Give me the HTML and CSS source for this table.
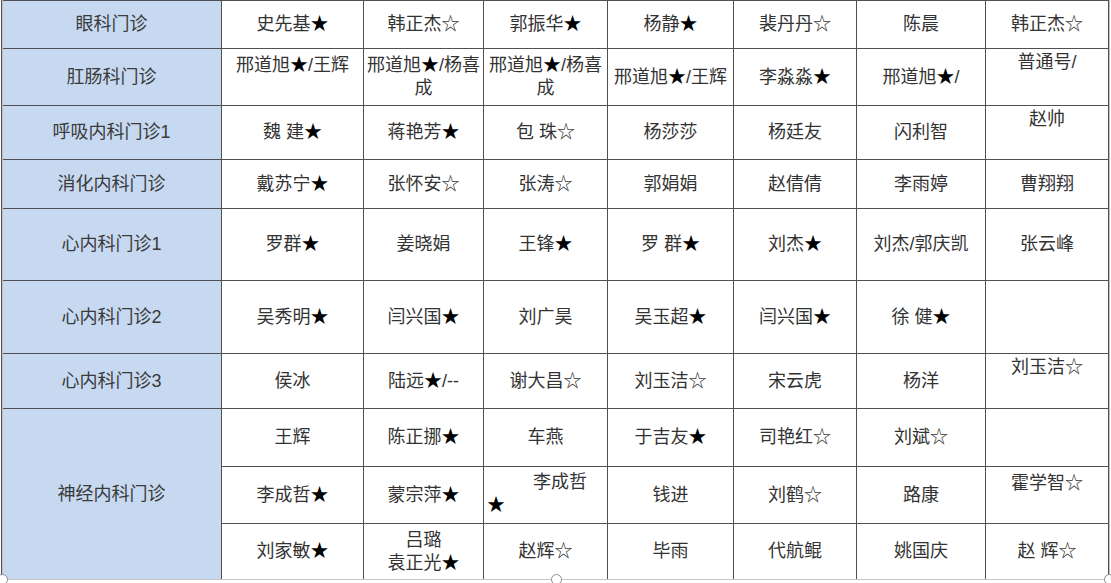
FILE: index.html
```html
<!DOCTYPE html>
<html lang="zh-CN">
<head>
<meta charset="utf-8">
<title>门诊排班表</title>
<link rel="stylesheet" href="styles.css">
</head>
<body>
<div class="sheet">
  <table class="roster">
    <colgroup>
      <col class="c-dept">
      <col class="c1"><col class="c2"><col class="c3"><col class="c4"><col class="c5"><col class="c6"><col class="c7">
    </colgroup>
    <tbody>
      <tr class="r1">
        <td class="dept">眼科门诊</td>
        <td>史先基<span class="s">★</span></td>
        <td>韩正杰☆</td>
        <td>郭振华<span class="s">★</span></td>
        <td>杨静<span class="s">★</span></td>
        <td>裴丹丹☆</td>
        <td>陈晨</td>
        <td>韩正杰☆</td>
      </tr>
      <tr class="r2">
        <td class="dept">肛肠科门诊</td>
        <td class="top5">邢道旭<span class="s">★</span>/王辉</td>
        <td>邢道旭<span class="s">★</span>/杨喜<br>成</td>
        <td>邢道旭<span class="s">★</span>/杨喜<br>成</td>
        <td>邢道旭<span class="s">★</span>/王辉</td>
        <td>李淼淼<span class="s">★</span></td>
        <td>邢道旭<span class="s">★</span>/</td>
        <td class="top">普通号/</td>
      </tr>
      <tr class="r3">
        <td class="dept">呼吸内科门诊1</td>
        <td>魏 建<span class="s">★</span></td>
        <td>蒋艳芳<span class="s">★</span></td>
        <td>包 珠☆</td>
        <td>杨莎莎</td>
        <td>杨廷友</td>
        <td>闪利智</td>
        <td class="top">赵帅</td>
      </tr>
      <tr class="r4">
        <td class="dept">消化内科门诊</td>
        <td>戴苏宁<span class="s">★</span></td>
        <td>张怀安☆</td>
        <td>张涛☆</td>
        <td>郭娟娟</td>
        <td>赵倩倩</td>
        <td>李雨婷</td>
        <td>曹翔翔</td>
      </tr>
      <tr class="r5">
        <td class="dept">心内科门诊1</td>
        <td>罗群<span class="s">★</span></td>
        <td>姜晓娟</td>
        <td>王锋<span class="s">★</span></td>
        <td>罗 群<span class="s">★</span></td>
        <td>刘杰<span class="s">★</span></td>
        <td>刘杰/郭庆凯</td>
        <td>张云峰</td>
      </tr>
      <tr class="r6">
        <td class="dept">心内科门诊2</td>
        <td>吴秀明<span class="s">★</span></td>
        <td>闫兴国<span class="s">★</span></td>
        <td>刘广昊</td>
        <td>吴玉超<span class="s">★</span></td>
        <td>闫兴国<span class="s">★</span></td>
        <td>徐 健<span class="s">★</span></td>
        <td></td>
      </tr>
      <tr class="r7">
        <td class="dept">心内科门诊3</td>
        <td>侯冰</td>
        <td>陆远<span class="s">★</span>/--</td>
        <td>谢大昌☆</td>
        <td>刘玉洁☆</td>
        <td>宋云虎</td>
        <td>杨洋</td>
        <td class="top">刘玉洁☆</td>
      </tr>
      <tr class="r8">
        <td class="dept" rowspan="3">神经内科门诊</td>
        <td>王辉</td>
        <td>陈正挪<span class="s">★</span></td>
        <td>车燕</td>
        <td>于吉友<span class="s">★</span></td>
        <td>司艳红☆</td>
        <td>刘斌☆</td>
        <td></td>
      </tr>
      <tr class="r9">
        <td>李成哲<span class="s">★</span></td>
        <td>蒙宗萍<span class="s">★</span></td>
        <td class="indent"><span class="ind-line">李成哲</span><span class="s">★</span></td>
        <td>钱进</td>
        <td>刘鹤☆</td>
        <td>路康</td>
        <td class="top5">霍学智☆</td>
      </tr>
      <tr class="r10">
        <td>刘家敏<span class="s">★</span></td>
        <td>吕璐<br>袁正光<span class="s">★</span></td>
        <td>赵辉☆</td>
        <td>毕雨</td>
        <td>代航鲲</td>
        <td>姚国庆</td>
        <td>赵 辉☆</td>
      </tr>
    </tbody>
  </table>
  <div class="selection">
    <span class="handle h-left"></span>
    <span class="handle h-mid"></span>
    <span class="handle h-right"></span>
  </div>
</div>
</body>
</html>
```

FILE: styles.css
```css
html, body {
  margin: 0;
  padding: 0;
  background: #ffffff;
}

.sheet {
  position: relative;
  width: 1111px;
  height: 583px;
  overflow: hidden;
}

.roster {
  border-collapse: collapse;
  table-layout: fixed;
  width: 1108px;
  margin-left: 1px;
  font-family: "Liberation Sans", "Noto Sans CJK SC", sans-serif;
  font-size: 18px;
  color: #333333;
}

.c-dept { width: 220px; }
.c1 { width: 142px; }
.c2 { width: 120px; }
.c3 { width: 124px; }
.c4 { width: 126px; }
.c5 { width: 123px; }
.c6 { width: 129px; }
.c7 { width: 123px; }

.roster td {
  border: 1px solid #505050;
  padding: 0 1px;
  text-align: center;
  vertical-align: middle;
  line-height: 23px;
  white-space: nowrap;
  overflow: hidden;
}

.roster tr:last-child td {
  border-bottom-color: #c8c8c8;
}

.roster td.dept {
  background: #c6d9f1;
  color: #3a3a3a;
}

.r1 { height: 48px; }
.r2 { height: 57px; }
.r3 { height: 54px; }
.r4 { height: 49px; }
.r5 { height: 72px; }
.r6 { height: 73px; }
.r7 { height: 55px; }
.r8 { height: 58px; }
.r9 { height: 57px; }
.r10 { height: 56px; }

.roster td.top {
  vertical-align: top;
  padding-top: 2px;
}

.roster td.top5 {
  vertical-align: top;
  padding-top: 5px;
}

.roster td.indent {
  vertical-align: top;
  text-align: left;
  padding: 4px 0 0 3px;
}

.ind-line {
  display: block;
  padding-left: 46px;
}

.s {
  color: #000000;
}

.selection {
  position: absolute;
  left: 2px;
  top: -10px;
  width: 1108px;
  height: 590px;
  box-sizing: border-box;
  border: 1px solid #c4c4c4;
  pointer-events: none;
}

.handle {
  position: absolute;
  width: 9px;
  height: 9px;
  border: 1px solid #8c8c8c;
  border-radius: 50%;
  background: #ffffff;
  bottom: -6px;
}

.h-left { left: -6px; }
.h-mid { left: 548px; }
.h-right { right: -6px; }
```
